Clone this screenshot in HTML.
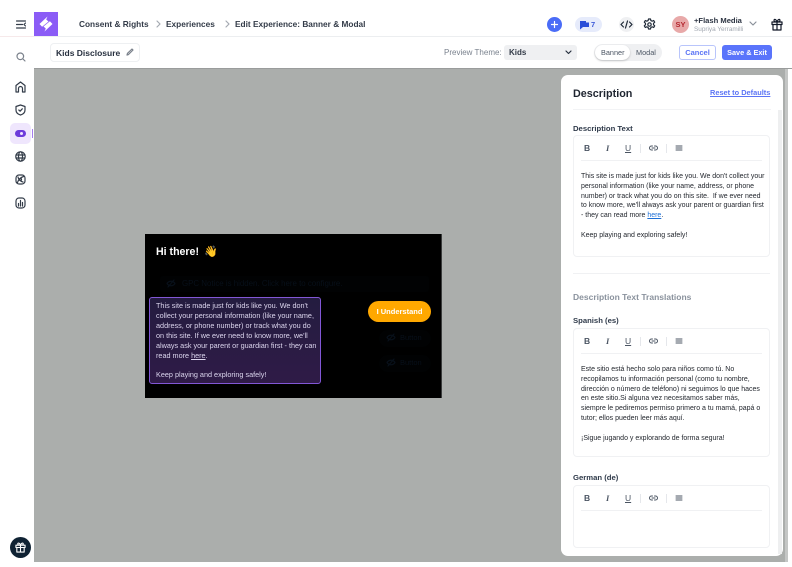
<!DOCTYPE html>
<html><head><meta charset="utf-8"><style>
*{box-sizing:border-box}
html,body{margin:0;padding:0;width:792px;height:567px;overflow:hidden;background:#fff;font-family:"Liberation Sans",sans-serif;color:#1f2937}
#w{position:absolute;left:0;top:0;width:792px;height:567px;overflow:hidden;filter:blur(.25px)}
.a{position:absolute;white-space:nowrap}
svg{position:absolute;fill:none;stroke:#333c49;stroke-width:1.2;stroke-linecap:round;stroke-linejoin:round}
.ed{position:absolute;left:573px;width:197px;background:#fff;border:1px solid #f0f1f3;border-radius:4px}
.tb{position:absolute;left:7px;right:7px;top:0;height:25px;border-bottom:1px solid #f0f1f3;font-size:8.500px;color:#4b5563}
.tb span{position:absolute;top:7px;line-height:11px}
.tb i.s{position:absolute;top:8px;width:1px;height:9px;background:#e5e7eb}
.tb svg{stroke:#4b5563;stroke-width:1;top:9px}
.tx{position:absolute;left:7px;font-size:7px;line-height:9.800px;color:#24282f;white-space:nowrap;letter-spacing:-.01px}
.lb{position:absolute;left:573px;font-size:7.700px;font-weight:bold;color:#2f3a4a;white-space:nowrap}
.bc{font-size:8.300px;font-weight:bold;color:#333b48;line-height:12px;top:18px}
</style></head><body><div id="w">
<div class="a" style="left:34px;top:69px;width:754px;height:493px;background:#abaeac"></div>
<div class="a" style="left:785px;top:69px;width:3px;height:493px;background:#c4c6c5"></div>
<div class="a" style="left:0;top:36px;width:34px;height:1px;background:#f6e9ea"></div>
<div class="a" style="left:34px;top:36px;width:758px;height:1px;background:#eceef0"></div>
<div class="a" style="left:34px;top:37px;width:758px;height:32px;background:#fff;border-bottom:1px solid #9a9c9c"></div>

<svg style="left:16px;top:20px" width="10" height="9" viewBox="0 0 10 9" stroke-width=".9"><path d="M.5 1h9M.5 4.500h6M.5 8h9M9.500 3 8 4.500 9.500 6"/></svg>
<div class="a" style="left:34px;top:12px;width:24px;height:24px;background:#8b5cf6"></div>
<svg style="left:37px;top:15px;stroke:none;fill:#fff" width="18" height="18" viewBox="0 0 18 18"><path d="M10.500 1.500 2.500 9l2.600 2.800 6.400-5.300-2.300-2zM7.500 16.500l8-7.500-2.600-2.800-6.400 5.300 2.300 2z"/></svg>
<div class="a bc" style="left:79px">Consent &amp; Rights</div>
<svg style="left:155px;top:20px;stroke:#a4a9b2" width="6" height="8" viewBox="0 0 6 8" stroke-width=".9"><path d="m2 1 3 3-3 3"/></svg>
<div class="a bc" style="left:166px">Experiences</div>
<svg style="left:224px;top:20px;stroke:#a4a9b2" width="6" height="8" viewBox="0 0 6 8" stroke-width=".9"><path d="m2 1 3 3-3 3"/></svg>
<div class="a bc" style="left:235px">Edit Experience: Banner &amp; Modal</div>

<div class="a" style="left:547px;top:17px;width:15px;height:15px;border-radius:50%;background:#4a6cf7"></div>
<svg style="left:550px;top:20px;stroke:#fff" width="9" height="9" viewBox="0 0 9 9" stroke-width="1.300"><path d="M4.500 1.500v6M1.500 4.500h6"/></svg>
<div class="a" style="left:575px;top:17px;width:27px;height:15px;border-radius:8px;background:#e6ebfb"></div>
<svg style="left:580px;top:20px;stroke:none;fill:#2b4fd8" width="9" height="10" viewBox="0 0 9 10"><path d="M0 1h6v1.500h3V7H3L0 9.500z"/></svg>
<div class="a" style="left:591px;top:19px;font-size:7.500px;font-weight:bold;color:#3d5bd9;line-height:11px">7</div>
<div class="a" style="left:619px;top:17px;width:15px;height:15px;border-radius:50%;background:#eff0f2"></div>
<svg style="left:620px;top:19px;stroke:#1f2937" width="13" height="11" viewBox="0 0 13 11" stroke-width="1"><path d="M3.500 3 1 5.500 3.500 8M9.500 3 12 5.500 9.500 8M7.500 2 5.500 9"/></svg>
<svg style="left:643px;top:18px;stroke:#1f2937" width="13" height="13" viewBox="0 0 13 13" stroke-width="1"><path d="M5.500 1h2l.4 1.600 1.300.6 1.500-.7 1 1.700-1.200 1.100v1.400l1.200 1.100-1 1.700-1.500-.7-1.300.6-.4 1.600h-2l-.4-1.600-1.300-.6-1.500.7-1-1.700 1.200-1.100V5.300L1.300 4.200l1-1.700 1.500.7 1.300-.6z"/><circle cx="6.500" cy="6.500" r="1.700"/></svg>
<div class="a" style="left:672px;top:16px;width:17px;height:17px;border-radius:50%;background:#e8a9a9;color:#b3262e;font-size:7.500px;font-weight:bold;line-height:17px;text-align:center">SY</div>
<div class="a" style="left:694px;top:15px;font-size:7.600px;font-weight:bold;color:#2a3240;line-height:11px">+Flash Media</div>
<div class="a" style="left:694px;top:25px;font-size:6.400px;color:#a2a8b1;line-height:9px">Supriya Yerramilli</div>
<svg style="left:749px;top:21px;stroke:#8a909a" width="8" height="6" viewBox="0 0 8 6" stroke-width=".9"><path d="m1 1 3 3 3-3"/></svg>
<svg style="left:771px;top:18px;stroke:#111827" width="12" height="13" viewBox="0 0 12 13" stroke-width="1"><path d="M1 4h10v2.500H1zM2 6.500V12h8V6.500M6 4v8M6 4C4 4 3 3.300 3 2.300 3 1 5 .8 6 4c1-3.200 3-3 3-1.700C9 3.300 8 4 6 4"/></svg>

<div class="a" style="left:50px;top:43px;width:90px;height:19px;border:1px solid #eef0f2;border-radius:4px;background:#fff"></div>
<div class="a" style="left:56px;top:47px;font-size:8.500px;font-weight:bold;color:#27303f;line-height:12px">Kids Disclosure</div>
<svg style="left:126px;top:48px;stroke:#7b828c" width="8" height="8" viewBox="0 0 8 8" stroke-width="1.100"><path d="m1 7 .5-1.700L6 1l1 1-4.500 4.500z"/></svg>

<div class="a" style="left:444px;top:47px;font-size:8px;color:#7a828e;line-height:12px">Preview Theme:</div>
<div class="a" style="left:504px;top:45px;width:73px;height:15px;background:#eff0f2;border-radius:3px"></div>
<div class="a" style="left:509px;top:47px;font-size:8px;font-weight:bold;color:#333b48;line-height:11px">Kids</div>
<svg style="left:565px;top:50px;stroke:#27303f" width="7" height="5" viewBox="0 0 7 5" stroke-width="1"><path d="m1 1 2.500 2.500L6 1"/></svg>
<div class="a" style="left:594px;top:44px;width:68px;height:17px;background:#eff0f2;border-radius:9px"></div>
<div class="a" style="left:595px;top:45px;width:35px;height:15px;background:#fff;border-radius:8px;box-shadow:0 1px 2px rgba(0,0,0,.2)"></div>
<div class="a" style="left:601px;top:47px;font-size:7.300px;color:#4b5563;line-height:11px">Banner</div>
<div class="a" style="left:636px;top:47px;font-size:7.300px;color:#4b5563;line-height:11px">Modal</div>
<div class="a" style="left:679px;top:45px;width:37px;height:15px;border:1px solid #b9c5fb;border-radius:3px;background:#fff;color:#5b74f5;font-size:7.500px;font-weight:bold;line-height:13px;text-align:center">Cancel</div>
<div class="a" style="left:722px;top:45px;width:50px;height:15px;border-radius:3px;background:#5a74fb;color:#fff;font-size:7.300px;font-weight:bold;line-height:15px;text-align:center">Save &amp; Exit</div>

<svg style="left:16px;top:52px;stroke:#7b828c" width="10" height="10" viewBox="0 0 10 10" stroke-width=".9"><circle cx="4.300" cy="4.300" r="3.300"/><path d="m7 7 2 2"/></svg>
<svg style="left:15px;top:81px" width="11" height="12" viewBox="0 0 11 12" stroke-width="1"><path d="M1 11V4.500L5.500 1 10 4.500V11H7.500V7.500a2 2 0 0 0-4 0V11z"/></svg>
<svg style="left:15px;top:104px" width="11" height="12" viewBox="0 0 11 12" stroke-width=".9"><path d="M5.500 1 10 2.500V6c0 2.800-2 4.300-4.500 5C3 10.300 1 8.800 1 6V2.500zM3.800 6l1.300 1.200 2.200-2.400"/></svg>
<div class="a" style="left:10px;top:123px;width:21px;height:21px;border-radius:5px;background:#efe6fd"></div>
<div class="a" style="left:15px;top:130px;width:11px;height:7px;border-radius:4px;background:#6d3bdb"></div>
<div class="a" style="left:20px;top:132px;width:3px;height:3px;border-radius:50%;background:#efe6fd"></div>
<div class="a" style="left:32px;top:129px;width:1px;height:9px;background:#a67ef0"></div>
<svg style="left:15px;top:151px" width="11" height="11" viewBox="0 0 11 11" stroke-width=".9"><circle cx="5.500" cy="5.500" r="4.700"/><ellipse cx="5.500" cy="5.500" rx="2" ry="4.700"/><path d="M1 4h9M1 7h9"/></svg>
<svg style="left:15px;top:174px" width="11" height="11" viewBox="0 0 11 11" stroke-width=".9"><rect x="1" y="1" width="9" height="9" rx="3"/><path d="M2.500 8.500c1-3 3-5 6-6M3 3c.5 2.500 2.500 4.500 5 5"/><circle cx="5.500" cy="5.500" r="1"/></svg>
<svg style="left:15px;top:197px" width="11" height="12" viewBox="0 0 11 12" stroke-width=".9"><rect x="1" y="1" width="9" height="10" rx="3"/><path d="M3.500 6.500V9M5.500 3.500V9M7.500 5.500V9"/></svg>
<div class="a" style="left:10px;top:537px;width:21px;height:21px;border-radius:50%;background:#0f2233"></div>
<svg style="left:15px;top:542px;stroke:#fff" width="11" height="11" viewBox="0 0 12 12" stroke-width=".9"><path d="M1 3.500h10V6H1zM2 6v5h8V6M6 3.500V11M6 3.500C4 3.500 3 3 3 2 3 .8 5 .6 6 3.500 7 .6 9 .8 9 2c0 1-1 1.500-3 1.500"/></svg>

<!-- preview -->
<div class="a" style="left:145px;top:234px;width:297px;height:164px;background:#000;border:1px solid #3a3c3c;border-width:0 1px 0 0"></div>
<div class="a" style="left:156px;top:245px;font-size:10.600px;font-weight:bold;color:#fff;line-height:14px">Hi there!</div>
<div class="a" style="left:204px;top:245px;font-size:11px;line-height:14px;color:#f5b54a;font-family:'DejaVu Sans',sans-serif">👋</div>
<div class="a" style="left:160px;top:276px;width:269px;height:16px;border-radius:3px;background:#010203"></div>
<svg style="left:166px;top:279px;stroke:#08101a" width="10" height="9" viewBox="0 0 10 9" stroke-width="1"><path d="M1 4.500C3 1.500 7 1.500 9 4.500 7 7.500 3 7.500 1 4.500zM2 8l6-7"/></svg>
<div class="a" style="left:182px;top:279px;font-size:7.900px;color:#08101a;line-height:10px">GPC Notice is hidden. Click here to configure.</div>
<div class="a" style="left:379px;top:330px;width:52px;height:17px;border-radius:9px;background:#010203"></div>
<svg style="left:386px;top:333px;stroke:#08101a" width="10" height="9" viewBox="0 0 10 9" stroke-width="1"><path d="M1 4.500C3 1.500 7 1.500 9 4.500 7 7.500 3 7.500 1 4.500zM2 8l6-7"/></svg>
<div class="a" style="left:400px;top:333px;font-size:7.500px;color:#08101a;line-height:10px">Button</div>
<div class="a" style="left:379px;top:355px;width:52px;height:17px;border-radius:9px;background:#010203"></div>
<svg style="left:386px;top:358px;stroke:#08101a" width="10" height="9" viewBox="0 0 10 9" stroke-width="1"><path d="M1 4.500C3 1.500 7 1.500 9 4.500 7 7.500 3 7.500 1 4.500zM2 8l6-7"/></svg>
<div class="a" style="left:400px;top:358px;font-size:7.500px;color:#08101a;line-height:10px">Button</div>
<div class="a" style="left:149px;top:297px;width:172px;height:87px;background:linear-gradient(#241c40,#2f1b47);border:1px solid #8257d6;border-radius:3px"></div>
<div class="a" style="left:156px;top:301px;font-size:7.250px;line-height:9.900px;color:#dcd6ee">This site is made just for kids like you. We don't<br>collect your personal information (like your name,<br>address, or phone number) or track what you do<br>on this site. If we ever need to know more, we'll<br>always ask your parent or guardian first - they can<br>read more <u>here</u>.<br><br>Keep playing and exploring safely!</div>
<div class="a" style="left:368px;top:301px;width:63px;height:21px;border-radius:11px;background:#ffa800;color:#fff;font-size:7.500px;font-weight:bold;line-height:21px;text-align:center">I Understand</div>

<!-- panel -->
<div class="a" style="left:561px;top:75px;width:222px;height:481px;background:#fff;border-radius:7px"></div>
<div class="a" style="left:573px;top:87px;font-size:10.800px;font-weight:bold;color:#1f2530;line-height:14px">Description</div>
<div class="a" style="left:710px;top:88px;font-size:7.400px;color:#5b74f5;line-height:10px;text-decoration:underline;font-weight:bold">Reset to Defaults</div>
<div class="a" style="left:573px;top:109px;width:198px;height:1px;background:#f2f3f5"></div>
<div class="a" style="left:778px;top:110px;width:4px;height:444px;background:#eeeff0"></div>

<div class="lb" style="top:124px">Description Text</div>
<div class="ed" style="top:135px;height:122px"><div class="tb"><span style="left:3px;font-weight:bold">B</span><span style="left:25px;font-style:italic;font-weight:bold;font-family:'Liberation Serif',serif">I</span><span style="left:44px;text-decoration:underline">U</span><i class="s" style="left:59px"></i><svg style="left:68px" width="9" height="6" viewBox="0 0 9 6"><path d="M3.500 1H2.500a2 2 0 0 0 0 4h1M5.500 1h1a2 2 0 0 1 0 4h-1M3 3h3"/></svg><i class="s" style="left:85px"></i><svg style="left:94px" width="8" height="6" viewBox="0 0 8 6"><path d="M1 1h6M1 3h6M1 5h6"/></svg></div>
<div class="tx" style="top:36px">This site is made just for kids like you. We don't collect your<br>personal information (like your name, address, or phone<br>number) or track what you do on this site.&nbsp; If we ever need<br>to know more, we'll always ask your parent or guardian first<br>- they can read more <u style="color:#1d6fd6">here</u>.<br><br>Keep playing and exploring safely!</div></div>
<div class="a" style="left:573px;top:273px;width:197px;height:1px;background:#f0f1f3"></div>
<div class="lb" style="top:292px;font-size:8.500px;color:#8a929d">Description Text Translations</div>
<div class="lb" style="top:316px">Spanish (es)</div>
<div class="ed" style="top:328px;height:129px"><div class="tb"><span style="left:3px;font-weight:bold">B</span><span style="left:25px;font-style:italic;font-weight:bold;font-family:'Liberation Serif',serif">I</span><span style="left:44px;text-decoration:underline">U</span><i class="s" style="left:59px"></i><svg style="left:68px" width="9" height="6" viewBox="0 0 9 6"><path d="M3.500 1H2.500a2 2 0 0 0 0 4h1M5.500 1h1a2 2 0 0 1 0 4h-1M3 3h3"/></svg><i class="s" style="left:85px"></i><svg style="left:94px" width="8" height="6" viewBox="0 0 8 6"><path d="M1 1h6M1 3h6M1 5h6"/></svg></div>
<div class="tx" style="top:36px">Este sitio está hecho solo para niños como tú. No<br>recopilamos tu información personal (como tu nombre,<br>dirección o número de teléfono) ni seguimos lo que haces<br>en este sitio.Si alguna vez necesitamos saber más,<br>siempre le pediremos permiso primero a tu mamá, papá o<br>tutor; ellos pueden leer más aquí.<br><br>¡Sigue jugando y explorando de forma segura!</div></div>
<div class="lb" style="top:473px">German (de)</div>
<div class="ed" style="top:485px;height:63px"><div class="tb"><span style="left:3px;font-weight:bold">B</span><span style="left:25px;font-style:italic;font-weight:bold;font-family:'Liberation Serif',serif">I</span><span style="left:44px;text-decoration:underline">U</span><i class="s" style="left:59px"></i><svg style="left:68px" width="9" height="6" viewBox="0 0 9 6"><path d="M3.500 1H2.500a2 2 0 0 0 0 4h1M5.500 1h1a2 2 0 0 1 0 4h-1M3 3h3"/></svg><i class="s" style="left:85px"></i><svg style="left:94px" width="8" height="6" viewBox="0 0 8 6"><path d="M1 1h6M1 3h6M1 5h6"/></svg></div></div>
</div></body></html>
